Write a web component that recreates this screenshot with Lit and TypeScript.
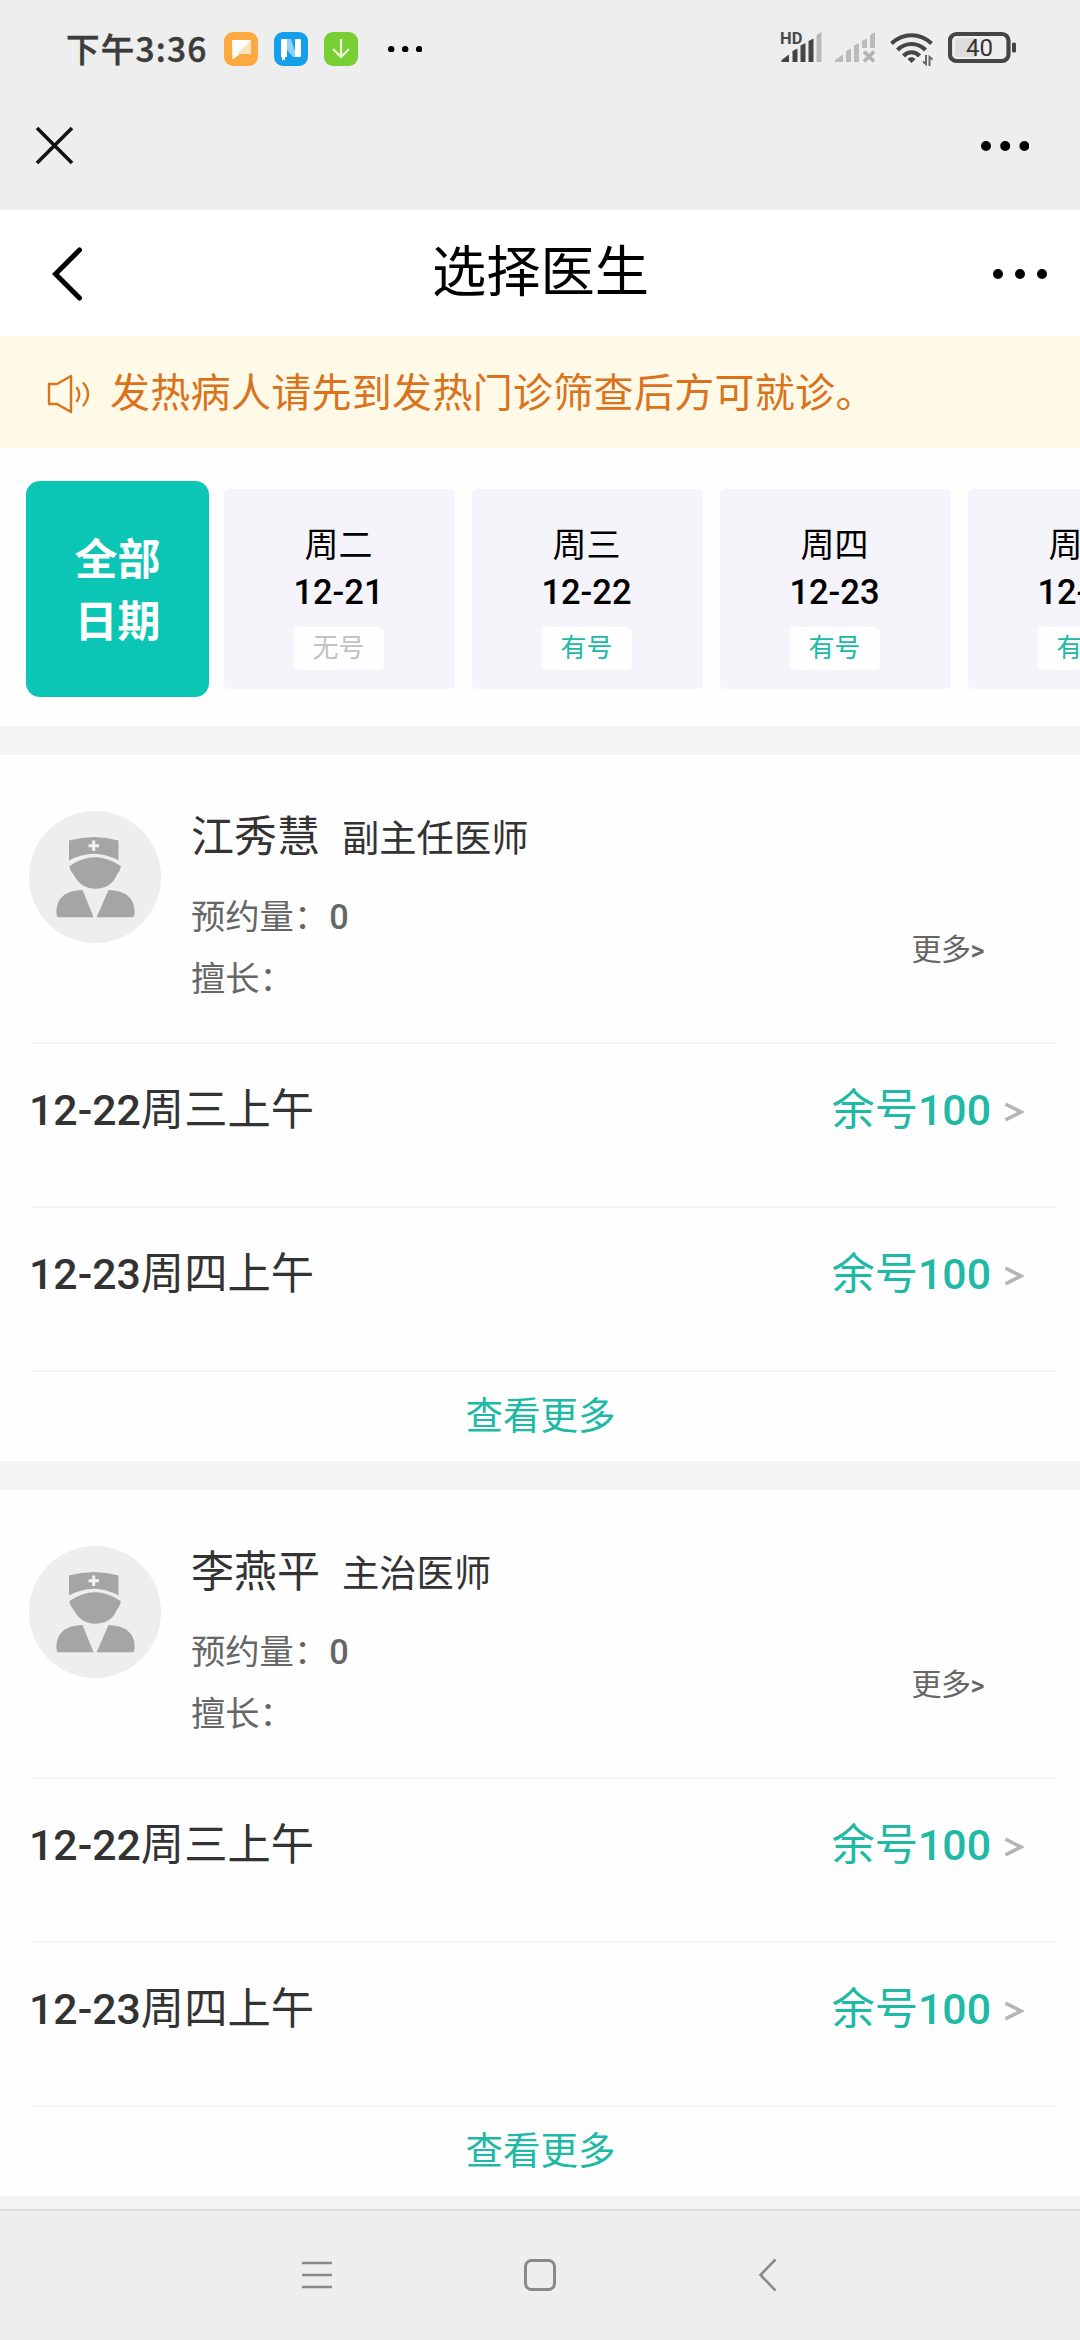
import { LitElement, html, css, svg } from "lit";
import { customElement, property } from "lit/decorators.js";
import { classMap } from "lit/directives/class-map.js";

interface Day {
  week: string;
  date: string;
  open: boolean;
}

interface Slot {
  date: string;
  label: string;
  left: number;
}

interface Doctor {
  name: string;
  rank: string;
  booked: number;
  slots: Slot[];
}

const DAYS: Day[] = [
  { week: "周二", date: "12-21", open: false },
  { week: "周三", date: "12-22", open: true },
  { week: "周四", date: "12-23", open: true },
  { week: "周五", date: "12-24", open: true },
];

const SLOTS: Slot[] = [
  { date: "12-22", label: "周三上午", left: 100 },
  { date: "12-23", label: "周四上午", left: 100 },
];

const DOCTORS: Doctor[] = [
  { name: "江秀慧", rank: "副主任医师", booked: 0, slots: SLOTS },
  { name: "李燕平", rank: "主治医师", booked: 0, slots: SLOTS },
];

const dots = (r: number, gap: number) => {
  const w = gap * 2 + r * 2;
  return html`<svg width=${w} height=${r * 2} viewBox="0 0 ${w} ${r * 2}">
    ${[0, 1, 2].map((i) => svg`<circle cx=${r + i * gap} cy=${r} r=${r} fill="#000" />`)}
  </svg>`;
};

@customElement("status-bar")
export class StatusBar extends LitElement {
  static styles = css`
    :host {
      display: flex;
      align-items: center;
      height: 98px;
      padding: 0 62px 0 66px;
      box-sizing: border-box;
      color: #3c3c3c;
    }
    svg {
      display: block;
      flex: none;
    }
    .time {
      width: 158px;
      padding-bottom: 2px;
      font-family: "Noto Sans CJK SC", sans-serif;
      font-size: 33.5px;
      line-height: 48px;
      font-weight: 500;
      letter-spacing: 1.2px;
      white-space: nowrap;
      -webkit-text-stroke: 0.5px #3c3c3c;
    }
    .apps {
      display: flex;
      gap: 16px;
      margin-right: 30px;
    }
    .system {
      display: flex;
      margin-left: auto;
    }
    .signal {
      overflow: visible;
    }
    .second {
      margin-left: 12px;
    }
    .wifi {
      margin-left: 15px;
    }
    .battery {
      margin-left: 14px;
    }
    .hd {
      font: 700 16.5px Roboto, sans-serif;
    }
    .level {
      font: 400 24px Roboto, sans-serif;
    }
  `;

  render() {
    return html`
      <div class="time">下午3:36</div>
      <div class="apps">
        <svg width="34" height="34" viewBox="0 0 34 34">
          <rect width="34" height="34" rx="9" fill="#fca942" />
          <path d="M8 8H27V22H16L8.500 27.500Z" fill="#fff" />
          <path d="M27 8V22H13Z" fill="#fde3bd" />
        </svg>
        <svg width="34" height="34" viewBox="0 0 34 34">
          <rect width="34" height="34" rx="9" fill="#159eea" />
          <path d="M13 7H17L23 25H19L13 18Z" fill="#8fd0f7" />
          <path d="M7 7H13V25H11V29L9.500 27L8 29V25H7Z" fill="#fff" />
          <rect x="21" y="7" width="6" height="18" rx="1" fill="#fff" />
        </svg>
        <svg width="34" height="34" viewBox="0 0 34 34">
          <rect width="34" height="34" rx="9" fill="#77cf32" />
          <path d="M17 7V25M9 17L17 25L25 17" fill="none" stroke="#eefbdc" stroke-width="2.200" />
        </svg>
      </div>
      ${dots(3.2, 14)}
      <div class="system">
        <svg class="signal" width="43" height="34" viewBox="0 0 43 34">
          <text class="hd" x="0" y="12.500" fill="#4a4a4a">HD</text>
          <g fill="#454545">
            <path d="M1.500 31V29L9 23.500V31Z" />
            <path d="M12.500 31V20L17.500 17.500V31Z" />
            <path d="M20.500 31V14.500L25.500 12V31Z" />
            <path d="M28.500 31V10L33.500 7.500V31Z" />
            <path d="M36.500 31V4L41.500 1V31Z" fill="#b9b9b9" />
          </g>
        </svg>
        <svg class="second" width="40" height="34" viewBox="0 0 40 34">
          <g fill="#bbbbbb">
            <path d="M0 31V29L8 23.500V31Z" />
            <path d="M11 31V20L16 17.500V31Z" />
            <path d="M19 31V14.500L24 12V31Z" />
            <path d="M27 17V10L32 7.500V17Z" />
            <path d="M35 17V4L40 1V17Z" />
          </g>
          <path d="M29 20.500L39 30.500M39 20.500L29 30.500" stroke="#b3b3b3" stroke-width="3.600" />
        </svg>
        <svg class="wifi" width="44" height="36" viewBox="0 0 44 36">
          <g fill="none" stroke="#454545" stroke-width="4.200">
            <path d="M1.500 12.500C13 1.500 30 1.500 41.500 12.500" />
            <path d="M7.500 19C15.500 11 27.500 11 35.500 19" />
            <path d="M13.500 25C18 20 25 20 29.500 25" />
          </g>
          <path d="M17.500 28C20 25.500 23 25.500 25.500 28L21.500 32Z" fill="#454545" />
          <path d="M36 24V33L33 30.500M39.500 35V26L42.500 28.500" fill="none" stroke="#666" stroke-width="2" />
        </svg>
        <svg class="battery" width="70" height="34" viewBox="0 0 70 34">
          <rect x="7" y="7" width="20" height="19" fill="#dcdcdc" />
          <rect x="2" y="3" width="58.500" height="27" rx="6.500" fill="none" stroke="#454545" stroke-width="4.200" />
          <rect x="64" y="11.500" width="4" height="10" rx="1.500" fill="#454545" />
          <text class="level" x="31.500" y="25" text-anchor="middle" fill="#333">40</text>
        </svg>
      </div>
    `;
  }
}

@customElement("date-strip")
export class DateStrip extends LitElement {
  static styles = css`
    :host {
      display: flex;
      gap: 17px;
      height: 278px;
      padding: 33px 0 0 26px;
      box-sizing: border-box;
      overflow: hidden;
      background: #fefefe;
    }
    .all {
      flex: none;
      width: 183px;
      height: 216px;
      margin-right: -2px;
      padding-top: 48px;
      box-sizing: border-box;
      border-radius: 14px;
      background: #0bc6b5;
      color: #fff;
      font-size: 43px;
      font-weight: 700;
      line-height: 62px;
      text-align: center;
    }
    .day {
      flex: none;
      display: flex;
      flex-direction: column;
      align-items: center;
      width: 231px;
      height: 200px;
      margin-top: 8px;
      padding: 33px 2px 0 0;
      box-sizing: border-box;
      border-radius: 5px;
      background: #f5f4fa;
      color: #000;
    }
    .week {
      font-size: 34px;
      line-height: 46px;
    }
    .date {
      margin-top: 1px;
      font-size: 34.5px;
      font-weight: 500;
      line-height: 46px;
    }
    .badge {
      width: 90px;
      margin-top: 12px;
      border-radius: 5px;
      background: #fefefe;
      color: #c2c2c2;
      font-size: 26px;
      line-height: 43px;
      text-align: center;
    }
    .badge.open {
      color: #20b9a5;
    }
  `;

  render() {
    return html`
      <div class="all">全部<br />日期</div>
      ${DAYS.map(
        (d) => html`
          <div class="day">
            <div class="week">${d.week}</div>
            <div class="date">${d.date}</div>
            <div class=${classMap({ badge: true, open: d.open })}>${d.open ? "有号" : "无号"}</div>
          </div>
        `,
      )}
    `;
  }
}

@customElement("doctor-card")
export class DoctorCard extends LitElement {
  @property({ attribute: false }) doctor!: Doctor;

  static styles = css`
    :host {
      display: block;
      height: 706px;
      background: #fefefe;
      color: #333;
    }
    .head {
      display: flex;
      height: 287px;
      padding-left: 29px;
      box-sizing: border-box;
    }
    .avatar {
      flex: none;
      width: 132px;
      height: 132px;
      margin-top: 56px;
    }
    .info {
      flex: 1;
      margin-left: 30px;
      padding-top: 50px;
      color: #666;
      font-size: 34.3px;
      line-height: 62px;
    }
    .who {
      display: flex;
      align-items: baseline;
      height: 81px;
      line-height: 64px;
      color: #333;
    }
    .name {
      font-size: 43px;
    }
    .rank {
      margin-left: 22px;
      font-size: 37.3px;
    }
    .num {
      font-weight: 500;
    }
    .info .num {
      margin-left: 1px;
    }
    .more {
      margin-top: 173px;
      margin-right: 96px;
      height: 44px;
      color: #666;
      font-size: 30px;
      line-height: 44px;
      letter-spacing: -0.5px;
    }
    .more .num {
      font-size: 27px;
    }
    .slot {
      display: flex;
      height: 164px;
      margin: 0 24px 0 31px;
      padding: 33px 32px 0 0;
      box-sizing: border-box;
      border-top: 2px solid #f4f4f4;
      font-size: 43.3px;
      line-height: 66px;
    }
    .slot .num {
      font-size: 42.8px;
    }
    .when {
      margin-left: -2px;
    }
    .left {
      margin-left: auto;
      color: #20b9a5;
    }
    .arrow {
      width: 20px;
      height: 20px;
      margin: 25px 0 0 13px;
    }
    .all {
      margin: 0 24px 0 31px;
      border-top: 2px solid #f4f4f4;
      padding-right: 6px;
      color: #20b9a5;
      font-size: 37.5px;
      line-height: 89px;
      text-align: center;
    }
  `;

  render() {
    const d = this.doctor;
    return html`
      <div class="head">
        <svg class="avatar" viewBox="0 0 132 132">
          <circle cx="66" cy="66" r="66" fill="#eeeeee" />
          <g fill="#a5a5a5">
            <path d="M40 29.500Q65 22.500 89.500 29.500V49.500Q65 36 40 49.500Z" />
            <path d="M40.500 55Q66 37.500 91.700 55C91.500 60 88.500 62 86.500 66.500C83 74 75 77.700 66 77.700C57 77.700 50 73 46 66C43.500 61.500 40.800 60 40.500 55Z" />
            <path d="M29 106.300Q27.400 106 27.400 101C27.500 86 38 79.500 53.500 79L64.600 106.300Z" />
            <path d="M104 106.300Q105.600 106 105.600 101C105.500 86 95 79.500 79.500 79L67.600 106.300Z" />
          </g>
          <path d="M64.700 29.500V40M59.500 34.700H70" stroke="#f4f4f4" stroke-width="3" />
        </svg>
        <div class="info">
          <div class="who">
            <span class="name">${d.name}</span>
            <span class="rank">${d.rank}</span>
          </div>
          <div>预约量：<span class="num">${d.booked}</span></div>
          <div>擅长：</div>
        </div>
        <div class="more">更多<span class="num">&gt;</span></div>
      </div>
      ${d.slots.map(
        (s) => html`
          <div class="slot">
            <span class="when"><span class="num">${s.date}</span>${s.label}</span>
            <span class="left">余号<span class="num">${s.left}</span></span>
            <svg class="arrow" viewBox="0 0 20 20">
              <path d="M1.500 2.200L17 10L1.500 17.800" fill="none" stroke="#b5b5b5" stroke-width="3.600" />
            </svg>
          </div>
        `,
      )}
      <div class="all">查看更多</div>
    `;
  }
}

@customElement("app-root")
export class AppRoot extends LitElement {
  static styles = css`
    :host {
      display: block;
      width: 1080px;
      height: 2340px;
      overflow: hidden;
      background: #eeeeee;
      font-family: Roboto, "Noto Sans CJK SC", sans-serif;
    }
    svg {
      display: block;
    }
    .host-bar {
      display: flex;
      align-items: center;
      justify-content: space-between;
      height: 112px;
      padding: 0 51px 17px 35px;
      box-sizing: border-box;
    }
    .title-bar {
      display: grid;
      grid-template-columns: 1fr auto 1fr;
      align-items: center;
      height: 126px;
      padding: 2px 33px 0 52px;
      box-sizing: border-box;
      background: #fff;
    }
    .title {
      margin-left: -18px;
      padding-bottom: 3px;
      color: #000;
      font-size: 54.3px;
      line-height: 80px;
    }
    .menu {
      justify-self: end;
    }
    .notice {
      display: flex;
      align-items: center;
      height: 112px;
      padding: 4px 0 0 47px;
      box-sizing: border-box;
      background: #fff9e8;
      color: #d9731c;
    }
    .notice-text {
      margin-left: 19px;
      font-size: 40px;
      letter-spacing: 0.3px;
      line-height: 60px;
      white-space: nowrap;
    }
    .band {
      height: 29px;
      background: #f5f5f5;
    }
    .edge {
      height: 13px;
      background: #f3f3f3;
      border-bottom: 2px solid #dcdcdc;
    }
    .nav {
      display: flex;
      align-items: center;
      height: 128px;
      padding-left: 302px;
    }
    .home {
      margin-left: 192px;
    }
    .back {
      margin-left: 202px;
    }
  `;

  render() {
    return html`
      <status-bar></status-bar>
      <div class="host-bar">
        <svg width="39" height="39" viewBox="0 0 39 39">
          <path d="M2 2L37 37M37 2L2 37" stroke="#111" stroke-width="3.600" />
        </svg>
        ${dots(5, 19.2)}
      </div>
      <div class="title-bar">
        <svg width="31" height="54" viewBox="0 0 31 54">
          <path d="M27.500 3L3.500 27L27.500 51" fill="none" stroke="#000" stroke-width="5" stroke-linecap="round" />
        </svg>
        <div class="title">选择医生</div>
        <div class="menu">${dots(5, 22)}</div>
      </div>
      <div class="notice">
        <svg width="44" height="40" viewBox="0 0 44 40">
          <g fill="none" stroke="#d9731c" stroke-width="2.400">
            <path d="M2 10H10L24 2V38L10 30H2Z" stroke-linejoin="round" />
            <path d="M29.500 13Q35 20 29.500 28M36 8.500Q46 20 36 32" />
          </g>
        </svg>
        <div class="notice-text">发热病人请先到发热门诊筛查后方可就诊。</div>
      </div>
      <date-strip></date-strip>
      ${DOCTORS.map(
        (d) => html`
          <div class="band"></div>
          <doctor-card .doctor=${d}></doctor-card>
        `,
      )}
      <div class="edge"></div>
      <div class="nav">
        <svg width="30" height="30" viewBox="0 0 30 30">
          <path d="M0 3H30M0 15H30M0 27H30" stroke="#8a8a8a" stroke-width="2.600" />
        </svg>
        <svg class="home" width="32" height="32" viewBox="0 0 32 32">
          <rect x="1.500" y="1.500" width="29" height="29" rx="6" fill="none" stroke="#8a8a8a" stroke-width="3" />
        </svg>
        <svg class="back" width="19" height="34" viewBox="0 0 19 34">
          <path d="M17.500 1.500L2.500 17L17.500 32.500" fill="none" stroke="#8a8a8a" stroke-width="2.600" />
        </svg>
      </div>
    `;
  }
}
